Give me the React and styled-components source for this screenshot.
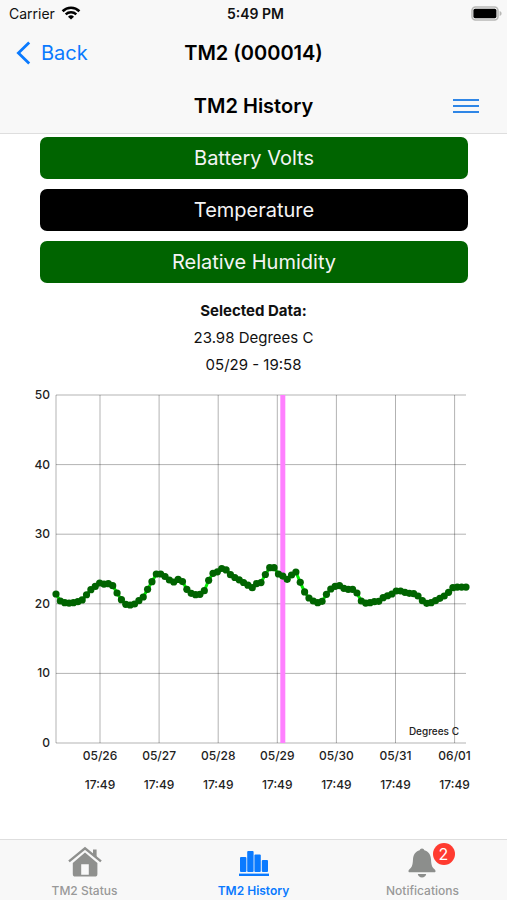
import React, {useState} from "react"
import styled, {createGlobalStyle, css} from "styled-components"

const METRICS = ["Battery Volts", "Temperature", "Relative Humidity"]

const READINGS = [
  21.41, 20.4, 20.16, 20.11, 20.16, 20.3, 20.55, 21.3, 22.03, 22.5,
  22.99, 22.84, 22.89, 22.6, 21.55, 20.59, 19.93, 19.83, 19.97, 20.45,
  20.98, 22.08, 23.18, 24.28, 24.28, 23.92, 23.42, 23.13, 23.5, 23.2,
  22.08, 21.51, 21.31, 21.36, 21.88, 23.38, 24.38, 24.6, 25.07, 24.86,
  24.18, 23.78, 23.44, 23.06, 22.68, 22.32, 22.9, 23.05, 24.21, 25.19,
  25.19, 24.28, 23.98, 23.52, 24.14, 24.57, 23.09, 21.7, 20.83, 20.4,
  20.16, 20.36, 21.36, 22.13, 22.51, 22.6, 22.23, 22.08, 22.08, 21.55,
  20.4, 20.11, 20.16, 20.3, 20.35, 20.88, 21.16, 21.41, 21.84, 21.84,
  21.65, 21.51, 21.45, 21.12, 20.45, 20.07, 20.16, 20.45, 20.79, 21.12,
  21.65, 22.31, 22.41, 22.41, 22.41,
]

const DAYS = ["05/26", "05/27", "05/28", "05/29", "05/30", "05/31", "06/01"]
const LEVELS = [0, 10, 20, 30, 40, 50]

// plot area inside the chart viewBox
const PLOT = {left: 56, right: 466, top: 17, bottom: 365}
const FIRST_DAY = 100
const DAY_WIDTH = 59.1

const xOf = (i) => PLOT.left + (i * (PLOT.right - PLOT.left)) / (READINGS.length - 1)
const yOf = (v) => PLOT.bottom - (v * (PLOT.bottom - PLOT.top)) / 50

const WifiIcon = () => (
  <svg width="20" height="14" viewBox="0 0 20 14" fill="none" stroke="#000" aria-hidden="true">
    <path d="M1.6 5.2a12 12 0 0 1 16.8 0" strokeWidth="2.6" />
    <path d="M4.7 8.4a7.6 7.6 0 0 1 10.6 0" strokeWidth="2.4" />
    <path d="M10 13.6 7 10.7a4.4 4.4 0 0 1 6 0z" fill="#000" stroke="none" />
  </svg>
)

const BatteryIcon = () => (
  <svg width="31" height="15" viewBox="0 0 31 15" aria-hidden="true">
    <rect x="1" y="1" width="26" height="13" rx="3.5" fill="#f8f8f8" stroke="#b8b8b6" strokeWidth="1.6" />
    <rect x="2.4" y="2.8" width="23" height="9.4" rx="1.6" fill="#000" />
    <path d="M28.6 5c1.4.4 2 1.400 2 2.500s-.6 2.100-2 2.500z" fill="#b8b8b6" />
  </svg>
)

const ChevronIcon = () => (
  <svg width="15" height="24" viewBox="0 0 15 24" fill="none" aria-hidden="true">
    <path d="M13.2 1.4 2.4 12l10.8 10.6" stroke="#0a7aff" strokeWidth="2.8" />
  </svg>
)

const MenuIcon = () => (
  <svg width="26" height="16" viewBox="0 0 26 16" aria-hidden="true">
    <path d="M0 2h26M0 8h26M0 14h26" stroke="#2f86e6" strokeWidth="1.9" />
  </svg>
)

const HouseIcon = () => (
  <svg width="34" height="32" viewBox="0 0 34 32" aria-hidden="true">
    <path d="M25 3.6h3.6v8.2L25 8.800z" fill="#8f908e" />
    <path d="M1 15.400 17 2.400l16 13" fill="none" stroke="#8f908e" strokeWidth="2.400" />
    <path fillRule="evenodd" fill="#8f908e" d="M17 6.600 29.400 17V28q0 2.600-2.600 2.600H7.400Q4.800 30.600 4.800 28V17zM13.200 18.200v10.600h7.600V18.200z" />
  </svg>
)

const BarsIcon = () => (
  <svg width="34" height="32" viewBox="0 0 34 32" fill="#0a7aff" aria-hidden="true">
    <rect x="3" y="11" width="6.400" height="15" rx="1" />
    <rect x="10.200" y="5" width="6.400" height="21" rx="1" />
    <rect x="17.400" y="8.400" width="6.400" height="17.600" rx="1" />
    <rect x="24.800" y="14" width="6.200" height="12" rx="1" />
    <rect x="2" y="27.600" width="30" height="2.400" />
  </svg>
)

const BellIcon = () => (
  <svg width="34" height="32" viewBox="0 0 34 32" fill="#8c8e8c" aria-hidden="true">
    <path d="M16 2.400c1.300 0 2.100.8 2.300 1.900 4.300 1.200 6.500 4.600 6.700 9 .3 6.300 1.300 8.200 3.500 9.900.8.700 1 1.300 1 2.100 0 .6-.4 1-1 1h-25c-.6 0-1-.4-1-1 0-.8.200-1.400 1-2.100 2.200-1.700 3.200-3.600 3.500-9.900.2-4.400 2.400-7.800 6.700-9 .2-1.100 1-1.900 2.300-1.900z" />
    <path d="M11.800 28h8.400c-.4 2.200-2 3.600-4.200 3.600s-3.800-1.400-4.200-3.600z" />
  </svg>
)

const HistoryChart = ({selected}) => (
  <Chart viewBox="0 0 507 430" role="img" aria-label="Temperature history">
    {LEVELS.map((v) => (
      <g key={v}>
        <GridLine x1={PLOT.left} x2={PLOT.right} y1={yOf(v)} y2={yOf(v)} />
        <AxisText x="50" y={yOf(v) + 4} textAnchor="end">{v}</AxisText>
      </g>
    ))}
    <GridLine x1={PLOT.left} x2={PLOT.left} y1={PLOT.top} y2={PLOT.bottom} />
    {DAYS.map((day, i) => {
      const x = FIRST_DAY + i * DAY_WIDTH
      return (
        <g key={day}>
          <GridLine x1={x} x2={x} y1={PLOT.top} y2={PLOT.bottom} />
          <AxisText x={x} y="382" textAnchor="middle">{day}</AxisText>
          <AxisText x={x} y="411" textAnchor="middle">17:49</AxisText>
        </g>
      )
    })}
    <line
      x1={xOf(selected)}
      x2={xOf(selected)}
      y1={PLOT.top}
      y2={PLOT.bottom}
      stroke="#ff80ff"
      strokeWidth="5"
    />
    <polyline
      points={READINGS.map((v, i) => `${xOf(i)},${yOf(v)}`).join(" ")}
      fill="none"
      stroke="#00f000"
      strokeWidth="3"
    />
    {READINGS.map((v, i) => (
      <circle key={i} cx={xOf(i)} cy={yOf(v)} r="3.6" fill="#006400" />
    ))}
    <UnitText x="459" y="357" textAnchor="end">Degrees C</UnitText>
  </Chart>
)

export default function App() {

  const [metric, setMetric] = useState("Temperature")

  return(
    <Screen>
      <GlobalStyle />
      <Header>
        <StatusBar>
          <Carrier>Carrier <WifiIcon /></Carrier>
          <Clock>5:49 PM</Clock>
          <StatusEnd><BatteryIcon /></StatusEnd>
        </StatusBar>
        <NavBar>
          <NavButton type="button"><ChevronIcon />Back</NavButton>
          <NavTitle>TM2 (000014)</NavTitle>
        </NavBar>
        <NavBar>
          <span />
          <NavTitle>TM2 History</NavTitle>
          <NavButton type="button" $end aria-label="Menu"><MenuIcon /></NavButton>
        </NavBar>
      </Header>
      <Content>
        <MetricList>
          {METRICS.map((m) => (
            <MetricButton key={m} type="button" $active={m === metric} onClick={() => setMetric(m)}>
              {m}
            </MetricButton>
          ))}
        </MetricList>
        <Selection>
          <SelectionLine $bold>Selected Data:</SelectionLine>
          <SelectionLine>23.98 Degrees C</SelectionLine>
          <SelectionLine>05/29 - 19:58</SelectionLine>
        </Selection>
        <HistoryChart selected={52} />
      </Content>
      <TabBar>
        <Tab href="#status"><HouseIcon />TM2 Status</Tab>
        <Tab href="#history" $active><BarsIcon />TM2 History</Tab>
        <Tab href="#notifications">
          <IconHolder><BellIcon /><Badge>2</Badge></IconHolder>
          Notifications
        </Tab>
      </TabBar>
    </Screen>
  )
}

const GlobalStyle = createGlobalStyle`
  *{
    box-sizing:border-box;
  }
  body{
    margin:0;
    background-color:white;
    color:#111;
    font-family:Inter, "Liberation Sans", sans-serif;
  }
  button{
    font-family:inherit;
    border:none;
    cursor:pointer;
  }
`

const Screen = styled.div`
  display:flex;
  flex-direction:column;
  min-height:100vh;
`

const Header = styled.header`
  padding-bottom:1px;
  background-color:#f8f8f8;
  border-bottom:1px solid #dedede;
`

const threeColumns = css`
  display:grid;
  grid-template-columns:1fr auto 1fr;
  align-items:center;
`

const StatusBar = styled.div`
  ${threeColumns}
  height:26px;
  padding:0 5px 0 9px;
  font-size:14px;
`

const Carrier = styled.span`
  display:flex;
  align-items:center;
  gap:6px;
`

const Clock = styled.span`
  font-weight:600;
`

const StatusEnd = styled.span`
  display:flex;
  justify-content:flex-end;
`

const NavBar = styled.div`
  ${threeColumns}
  height:53px;
  padding:0 16px;
`

const NavButton = styled.button`
  display:flex;
  align-items:center;
  gap:10px;
  justify-self:${props => props.$end ? "end" : "start"};
  padding:${props => props.$end ? "8px 12px" : "0"};
  background:none;
  color:#0a7aff;
  font-size:20px;
`

const NavTitle = styled.h1`
  margin:0;
  color:#000;
  font-size:20px;
  font-weight:600;
`

const Content = styled.main`
  flex:1;
`

const MetricList = styled.div`
  display:flex;
  flex-direction:column;
  gap:10px;
  padding:3px 39px 0 40px;
`

const MetricButton = styled.button`
  height:42px;
  padding:0;
  border-radius:7px;
  background-color:${props => props.$active ? "#000" : "#006400"};
  color:#f4f4f4;
  font-size:20px;
`

const Selection = styled.div`
  margin-top:14px;
  text-align:center;
`

const SelectionLine = styled.p`
  margin:0;
  font-size:15px;
  line-height:27px;
  font-weight:${props => props.$bold ? 700 : 400};
`

const Chart = styled.svg`
  display:block;
  width:100%;
`

const GridLine = styled.line`
  stroke:#000;
  stroke-opacity:0.3;
  stroke-width:1px;
`

const AxisText = styled.text`
  fill:#222;
  font-size:12px;
  font-weight:500;
`

const UnitText = styled.text`
  fill:#222;
  font-size:10px;
  font-weight:500;
`

const TabBar = styled.nav`
  display:grid;
  grid-template-columns:repeat(3, 1fr);
  background-color:#f8f8f8;
  border-top:1px solid #dedede;
`

const Tab = styled.a`
  display:flex;
  flex-direction:column;
  align-items:center;
  gap:5px;
  padding-top:6px;
  height:60px;
  color:${props => props.$active ? "#0a7aff" : "#999"};
  font-size:12px;
  font-weight:${props => props.$active ? 600 : 500};
  line-height:16px;
  text-decoration:none;
`

const IconHolder = styled.span`
  position:relative;
  height:32px;
`

const Badge = styled.span`
  position:absolute;
  left:27px;
  top:-3px;
  width:22px;
  height:22px;
  border-radius:50%;
  background-color:#ff3b30;
  color:white;
  font-size:16px;
  font-weight:400;
  line-height:22px;
  text-align:center;
`
